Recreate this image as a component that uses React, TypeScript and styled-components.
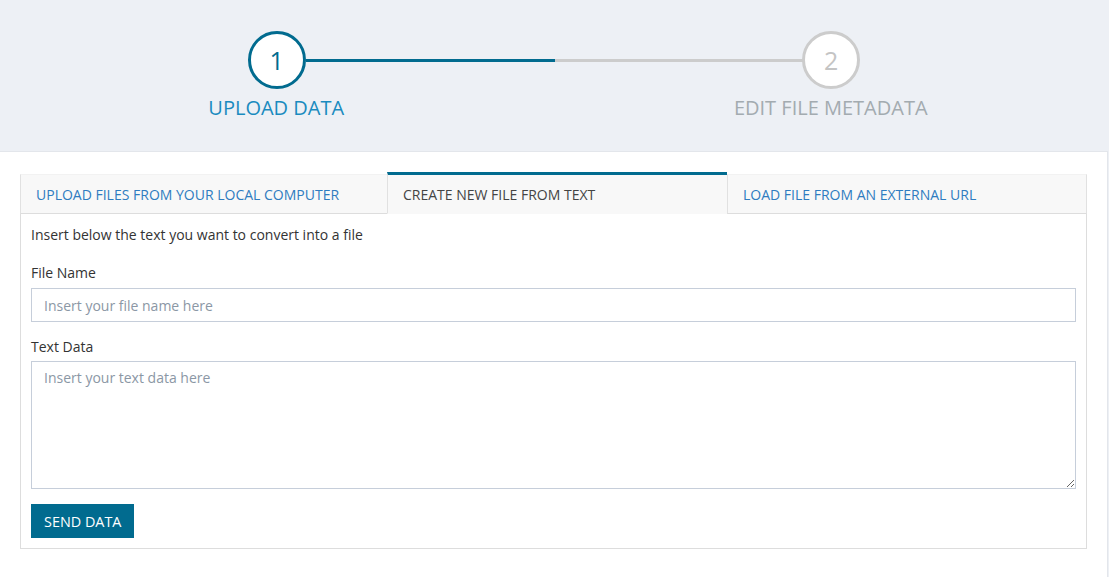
import React from "react";
import styled, { createGlobalStyle } from "styled-components";

const Global = createGlobalStyle`
  html, body { margin: 0; padding: 0; }
  body {
    background: #edf0f5;
    font-family: "Open Sans", "Liberation Sans", sans-serif;
    color: #333;
    font-size: 14px;
  }
  * { box-sizing: border-box; }
`;

const Page = styled.div`
  width: 1109px;
`;

const Header = styled.header`
  height: 151px;
  display: flex;
  padding-top: 31px;
`;

const Step = styled.div`
  flex: 1;
  display: flex;
  flex-direction: column;
  align-items: center;
`;

const StepTrack = styled.div`
  width: 100%;
  display: flex;
  align-items: center;
`;

const Line = styled.div<{ $color: string }>`
  flex: 1;
  height: 3px;
  background: ${(p) => p.$color};
`;

const Circle = styled.div<{ $active?: boolean }>`
  width: 58px;
  height: 58px;
  border-radius: 50%;
  background: #fff;
  border: 3px solid ${(p) => (p.$active ? "#016b8f" : "#cccccc")};
  color: ${(p) => (p.$active ? "#016b8f" : "#c4c4c4")};
  display: flex;
  align-items: center;
  justify-content: center;
  font-size: 25px;
  font-weight: 400;
  margin-left: -1px;
`;

const StepLabel = styled.div<{ $active?: boolean }>`
  margin-top: 5px;
  font-size: 20px;
  line-height: 28px;
  color: ${(p) => (p.$active ? "#1a8bbf" : "#a3abb0")};
  margin-left: -2px;
`;

const Card = styled.main`
  width: 1108px;
  background: #fff;
  border-top: 1px solid #e3e6eb;
  border-right: 1px solid #e3e6eb;
  padding: 20px 20px 28px 20px;
`;

const Tabs = styled.div`
  display: grid;
  grid-template-columns: 367fr 340fr 360fr;
  height: 42px;
  align-items: end;
`;

const Tab = styled.div<{ $active?: boolean; $last?: boolean }>`
  height: ${(p) => (p.$active ? "42px" : "40px")};
  background: #f8f8f8;
  border-top: ${(p) => (p.$active ? "3px solid #016b8f" : "1px solid #f2f2f2")};
  border-left: 1px solid #e1e1e1;
  border-right: ${(p) => (p.$last ? "1px solid #e1e1e1" : "none")};
  border-bottom: ${(p) => (p.$active ? "1px solid #f8f8f8" : "1px solid #dddddd")};
  padding-left: 15px;
  display: flex;
  align-items: center;
  font-size: 14px;
  color: ${(p) => (p.$active ? "#444" : "#2f7cc0")};
  white-space: nowrap;
`;

const Panel = styled.section`
  border: 1px solid #dddddd;
  border-top: none;
  padding: 11px 10px 10px 10px;
  display: flex;
  flex-direction: column;
`;

const Intro = styled.p`
  margin: 0;
  line-height: 20px;
  font-size: 14px;
  color: #333;
`;

const Label = styled.label<{ $top: number; $bottom: number }>`
  display: block;
  margin-top: ${(p) => p.$top}px;
  margin-bottom: ${(p) => p.$bottom}px;
  line-height: 20px;
  font-size: 14px;
  color: #333;
`;

const Input = styled.input`
  width: 100%;
  height: 34px;
  border: 1px solid #c6ceda;
  border-radius: 0;
  padding: 0 12px;
  font-family: inherit;
  font-size: 14px;
  color: #333;
  outline: none;
  &::placeholder { color: #8b97a5; }
`;

const TextArea = styled.textarea`
  width: 100%;
  height: 128px;
  border: 1px solid #c6ceda;
  border-radius: 0;
  padding: 6px 12px;
  font-family: inherit;
  font-size: 14px;
  line-height: 20px;
  color: #333;
  outline: none;
  resize: vertical;
  display: block;
  &::placeholder { color: #8b97a5; }
`;

const Button = styled.button`
  margin-top: 15px;
  align-self: flex-start;
  height: 34px;
  padding: 0 13px;
  border: none;
  border-radius: 0;
  background: #016b8f;
  color: #fff;
  font-family: inherit;
  font-size: 14.4px;
  cursor: pointer;
`;

export default function App() {
  return (
    <Page>
      <Global />
      <Header>
        <Step>
          <StepTrack>
            <Line $color="transparent" />
            <Circle $active>1</Circle>
            <Line $color="#016b8f" />
          </StepTrack>
          <StepLabel $active>UPLOAD DATA</StepLabel>
        </Step>
        <Step>
          <StepTrack>
            <Line $color="#cccccc" />
            <Circle>2</Circle>
            <Line $color="transparent" />
          </StepTrack>
          <StepLabel>EDIT FILE METADATA</StepLabel>
        </Step>
      </Header>
      <Card>
        <Tabs>
          <Tab>UPLOAD FILES FROM YOUR LOCAL COMPUTER</Tab>
          <Tab $active>CREATE NEW FILE FROM TEXT</Tab>
          <Tab $last>LOAD FILE FROM AN EXTERNAL URL</Tab>
        </Tabs>
        <Panel>
          <Intro>Insert below the text you want to convert into a file</Intro>
          <Label $top={18} $bottom={5}>File Name</Label>
          <Input placeholder="Insert your file name here" />
          <Label $top={15} $bottom={4}>Text Data</Label>
          <TextArea placeholder="Insert your text data here" />
          <Button>SEND DATA</Button>
        </Panel>
      </Card>
    </Page>
  );
}
